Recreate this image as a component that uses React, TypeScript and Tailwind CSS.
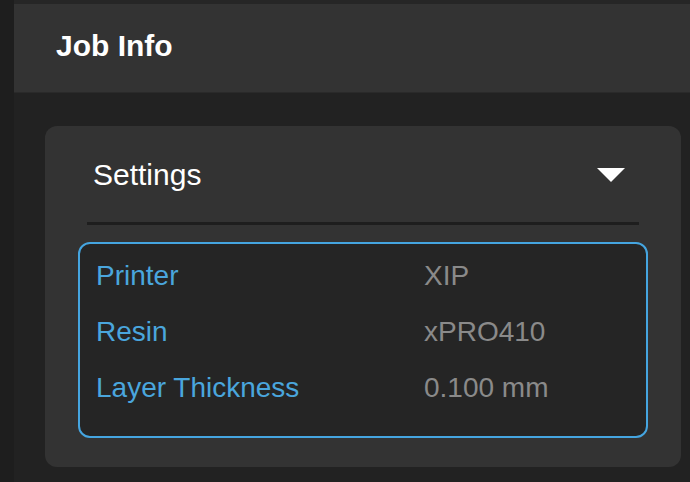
const rows = [
  { label: 'Printer', value: 'XIP' },
  { label: 'Resin', value: 'xPRO410' },
  { label: 'Layer Thickness', value: '0.100 mm' },
];

export default function App() {
  return (
    <div
      className="flex h-[482px] w-[690px] overflow-hidden bg-[#1e1e1e]"
      style={{ fontFamily: '"Liberation Sans", Arial, sans-serif' }}
    >
      <div className="w-[14px] shrink-0 bg-[#1e1e1e]" />
      <div className="flex flex-1 flex-col">
        <div className="h-[4px] shrink-0 bg-[#262626]" />
        <div className="flex h-[89px] shrink-0 items-center border-b border-[#2a2a2a] bg-[#333333] pb-[4px] pl-[42px]">
          <h1 className="text-[30px] font-bold leading-none text-white">Job Info</h1>
        </div>
        <div className="flex-1 bg-[#222222] pl-[31px] pr-[9px] pt-[33px]">
          <div className="h-[341px] rounded-[12px] bg-[#333333]">
            <div className="flex h-[96px] items-center justify-between pl-[48px] pr-[56px] pt-[2px]">
              <span className="text-[30px] leading-none text-white">Settings</span>
              <svg width="28" height="14" viewBox="0 0 28 14">
                <polygon points="0,0 28,0 14,14" fill="#ffffff" />
              </svg>
            </div>
            <div className="mx-[42px] h-[3px] bg-[#1e1e1e]" />
            <div className="mx-[33px] mt-[17px] rounded-[12px] border-2 border-[#45a5e0] bg-[#252525] pb-[20px] pl-[16px] pt-[4px]">
              {rows.map((r) => (
                <div key={r.label} className="flex h-[56px] items-center text-[28px]">
                  <span className="w-[328px] text-[#4aa6dd]">{r.label}</span>
                  <span className="text-[#8a8a8a]">{r.value}</span>
                </div>
              ))}
            </div>
          </div>
        </div>
      </div>
    </div>
  );
}
